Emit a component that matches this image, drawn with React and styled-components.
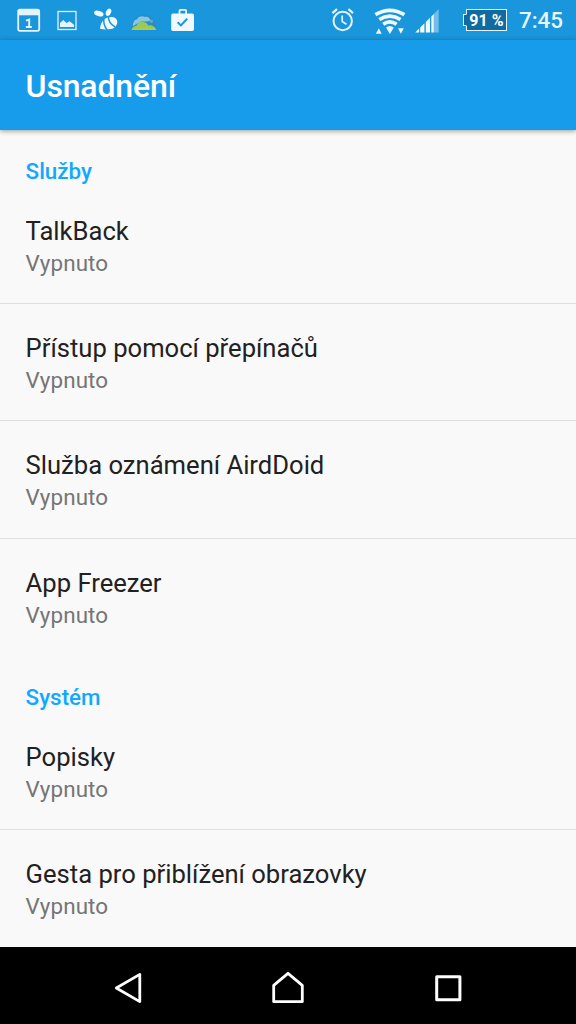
import styled, { createGlobalStyle } from "styled-components";

const GlobalStyle = createGlobalStyle`
  * {
    box-sizing: border-box;
  }
  body {
    margin: 0;
    background: #f9f9f9;
    font-family: Roboto, sans-serif;
  }
`;

const Screen = styled.div`
  display: flex;
  flex-direction: column;
  width: 576px;
  height: 1024px;
  overflow: hidden;
  background: #f9f9f9;
`;

const StatusBar = styled.div`
  display: flex;
  flex: none;
  align-items: center;
  justify-content: space-between;
  height: 40px;
  padding: 0 13px 0 16px;
  background: #1a96dc;
`;

const IconGroup = styled.div`
  display: flex;
  align-items: center;
  svg {
    display: block;
    overflow: visible;
  }
`;

const Notifications = styled(IconGroup)`
  gap: 14px;
`;

const SystemIcons = styled(IconGroup)`
  gap: 9px;
`;

const Battery = styled.div`
  display: flex;
  align-items: center;
  margin: 0 3px 0 15px;
`;

const BatteryTip = styled.span`
  width: 4px;
  height: 12px;
  margin-right: -1px;
  border: 1px solid #e4f3fc;
  border-right-color: #116aa0;
  background: #116aa0;
  z-index: 1;
`;

const BatteryLevel = styled.span`
  width: 41px;
  height: 22px;
  border: 1px solid #e4f3fc;
  background: #116aa0;
  color: #fff;
  font-size: 16px;
  font-weight: 700;
  line-height: 21px;
  text-align: center;
  white-space: nowrap;
`;

const Clock = styled.span`
  color: #e8f5fd;
  font-size: 22.4px;
  font-weight: 500;
  line-height: 42px;
`;

const AppBar = styled.header`
  display: flex;
  flex: none;
  align-items: center;
  height: 90px;
  padding: 2px 25.6px 0;
  background: #169ceb;
  box-shadow: 0 1px 5px rgba(0, 0, 0, 0.4);
`;

const Title = styled.h1`
  margin: 0;
  color: #fff;
  font-size: 32px;
  font-weight: 500;
  letter-spacing: -0.15px;
`;

const Content = styled.main`
  flex: 1;
  min-height: 0;
  overflow: hidden;
`;

const SectionTitle = styled.h2`
  height: 56.6px;
  margin: 0;
  padding: 27px 25.6px 0;
  color: #12a8ff;
  font-size: 22.4px;
  font-weight: 500;
  line-height: 28px;
`;

const Row = styled.div`
  height: 117.4px;
  padding: 27px 25.6px 0;
  border-bottom: 1px solid ${(props) => (props.$last ? "transparent" : "#dedede")};
`;

const RowTitle = styled.div`
  color: #212121;
  font-size: 25.6px;
  line-height: 34px;
`;

const RowSummary = styled.div`
  color: #757575;
  font-size: 22.4px;
  line-height: 31.4px;
  letter-spacing: 0.1px;
`;

const NavBar = styled.nav`
  display: grid;
  flex: none;
  grid-template-columns: repeat(3, 160px);
  justify-content: center;
  justify-items: center;
  align-items: center;
  height: 77px;
  padding-top: 4px;
  background: #000;
`;

const sections = [
  {
    title: "Služby",
    items: ["TalkBack", "Přístup pomocí přepínačů", "Služba oznámení AirdDoid", "App Freezer"],
  },
  {
    title: "Systém",
    items: ["Popisky", "Gesta pro přiblížení obrazovky"],
  },
];

const CalendarIcon = () => (
  <svg width="26" height="40" viewBox="16 0 26 40">
    <rect x="18.2" y="9.7" width="21" height="21.2" rx="1.8" fill="none" stroke="#e4f3fc" strokeWidth="1.8" />
    <path d="M18 10h21.5v5.3H18z" fill="#e4f3fc" />
    <path d="M26 20.7l3.2-1.2v7.6M25.8 27h6" fill="none" stroke="#e4f3fc" strokeWidth="1.9" />
  </svg>
);

const PictureIcon = () => (
  <svg width="22" height="40" viewBox="56 0 22 40">
    <rect x="58" y="11.5" width="18" height="18" fill="none" stroke="#e4f3fc" strokeWidth="1.3" />
    <path d="M60 27v-4l3.2-3 3.4 3 3-1.7 4.4 3.4V27z" fill="#e4f3fc" />
  </svg>
);

const BeeIcon = () => (
  <svg width="25" height="40" viewBox="92 0 25 40">
    <g fill="#f2f9fd">
      <ellipse cx="98.8" cy="13.5" rx="4.9" ry="2.6" transform="rotate(17 98.8 13.5)" />
      <ellipse cx="108.5" cy="12.2" rx="2.5" ry="3.8" transform="rotate(25 108.5 12.2)" />
      <path d="M100 28.7c.3-3.7 1.7-7 4.2-9.2 2.300-2 5-2.600 7.500-2.500 3.300.1 5.700 2 5.600 5-.1 3.700-3 6.300-6.300 7-3.500.7-7.500.6-11-.3z" />
    </g>
    <g fill="none" stroke="#1a96dc" strokeWidth="1.5">
      <path d="M108.300 16c-.2 4.500 2.200 8.300 6.700 10.800" />
      <path d="M103.800 18.500c-.4 4.500.4 8 3.500 11.500" />
    </g>
  </svg>
);

const WeatherIcon = () => (
  <svg width="26" height="40" viewBox="131 0 26 40">
    <path d="M131.5 29.500c-.3-8.500 4.800-15 12.500-15s12.700 6.500 12.200 15z" fill="#2e8dc0" />
    <path d="M133 26c-.3-4 1.600-6.600 4.200-6.800.8-2.600 4.800-4 7.300-2.200 3-.7 5.700.9 5.800 3.600l-3 .8-6 .2z" fill="#86c6e4" />
    <circle cx="151.3" cy="21.3" r="1.7" fill="#5ea9cf" />
    <path d="M131.5 30c.4-2.800 2.500-4 5-4.300 1.200-2.800 3.800-4.300 6.500-4 2.600.2 4.200 1.800 5.200 3.700 3.500-.5 7.400 1.300 8 4.600z" fill="#9cca58" />
    <path d="M133 29.700l4-1.600 4 .6 5-1.400 9.300 2.400z" fill="#b5ca46" />
  </svg>
);

const BagIcon = () => (
  <svg width="24" height="40" viewBox="171 0 24 40">
    <path d="M179.500 14v-3.200q0-1 1-1h4.600q1 0 1 1V14" fill="none" stroke="#eef8fd" strokeWidth="1.8" />
    <rect x="171.200" y="13.600" width="22.800" height="17.400" rx="1.800" fill="#eef8fd" />
    <path d="M177.600 22.200l3.300 3.200 6.300-6.600" fill="none" stroke="#1a96dc" strokeWidth="2" />
  </svg>
);

const AlarmIcon = () => (
  <svg width="24" height="40" viewBox="331 0 24 40" fill="none" stroke="#e4f3fc">
    <circle cx="342.7" cy="21" r="9.2" strokeWidth="2" />
    <path d="M332.400 13.100l4.600-3.900M353 13.100l-4.600-3.900" strokeWidth="2.200" />
    <path d="M342.200 15.500v6l4.300 2.700" strokeWidth="1.700" />
  </svg>
);

const WifiIcon = () => (
  <svg width="42" height="40" viewBox="364 0 42 40">
    <g fill="none" stroke="#eef8fd" strokeWidth="3.7">
      <path d="M375.400 14.700q14.500-8.800 29 0" />
      <path d="M379.300 19.500q10.600-6.800 21.200 0" />
      <path d="M383.200 24.200q6.700-4.600 13.400 0" />
    </g>
    <path d="M386 27.600q3.900-3.200 7.800 0l-3.900 6.500zM375.900 33.800l2.900-5.600 2.900 5.600zM398 28.200h5.800l-2.900 5.600z" fill="#eef8fd" />
  </svg>
);

const SignalIcon = () => (
  <svg width="24" height="40" viewBox="415 0 24 40" fill="#f2f9fd">
    <path d="M415.200 32.500l3.900-3.900v3.900zM420.200 32.500v-5l4.200-4.200v9.200zM425.800 32.500V21.900l4.200-4.200v14.800z" />
    <path d="M431.300 32.500V16.400l2.500-2.500v18.600z" />
    <path d="M433.800 32.500V13.900l4.900-4.900v23.500z" opacity=".4" />
  </svg>
);

const BackIcon = () => (
  <svg width="28" height="32" viewBox="114 972 28 32" fill="none" stroke="#fff" strokeWidth="2.8" strokeLinejoin="round">
    <path d="M116.300 988l23.500-13.600v27.200z" />
  </svg>
);

const HomeIcon = () => (
  <svg width="32" height="32" viewBox="272 972 32 32" fill="none" stroke="#fff" strokeWidth="2.8" strokeLinejoin="round">
    <path d="M273.700 985.300L288 973.400l14.300 11.900v16.400h-28.600z" />
  </svg>
);

const RecentIcon = () => (
  <svg width="28" height="32" viewBox="434 972 28 32" fill="none" stroke="#fff" strokeWidth="3" strokeLinejoin="round">
    <rect x="436.700" y="976.700" width="23.200" height="23" />
  </svg>
);

const Section = ({ section }) => (
  <section>
    <SectionTitle>{section.title}</SectionTitle>
    {section.items.map((item, i) => (
      <Row key={item} $last={i === section.items.length - 1}>
        <RowTitle>{item}</RowTitle>
        <RowSummary>Vypnuto</RowSummary>
      </Row>
    ))}
  </section>
);

const App = () => {
  return (
    <Screen>
      <GlobalStyle />
      <StatusBar>
        <Notifications>
          <CalendarIcon />
          <PictureIcon />
          <BeeIcon />
          <WeatherIcon />
          <BagIcon />
        </Notifications>
        <SystemIcons>
          <AlarmIcon />
          <WifiIcon />
          <SignalIcon />
          <Battery>
            <BatteryTip />
            <BatteryLevel>91 %</BatteryLevel>
          </Battery>
          <Clock>7:45</Clock>
        </SystemIcons>
      </StatusBar>
      <AppBar>
        <Title>Usnadnění</Title>
      </AppBar>
      <Content>
        {sections.map((section) => (
          <Section key={section.title} section={section} />
        ))}
      </Content>
      <NavBar>
        <BackIcon />
        <HomeIcon />
        <RecentIcon />
      </NavBar>
    </Screen>
  );
};

export default App;
